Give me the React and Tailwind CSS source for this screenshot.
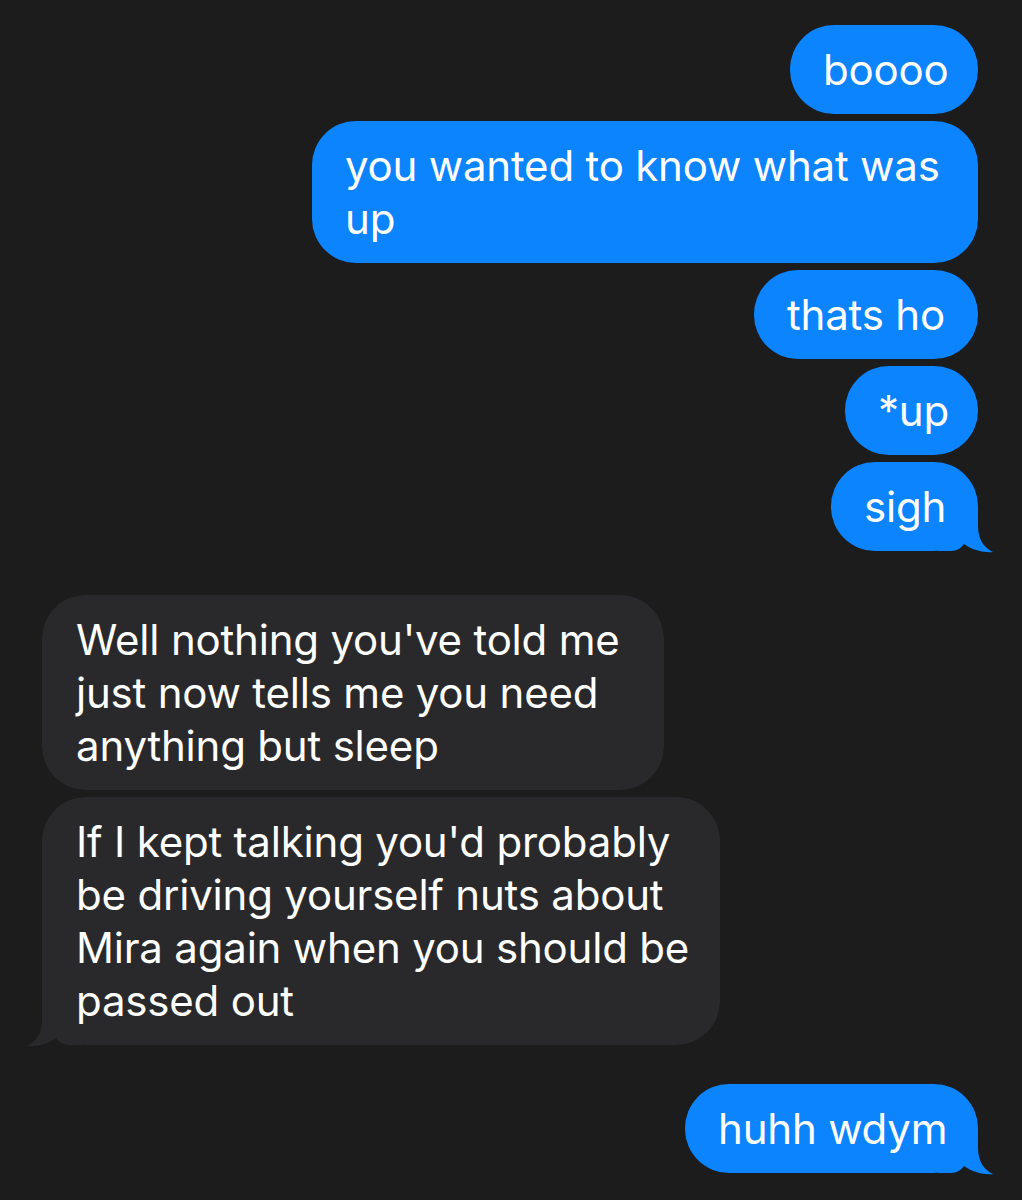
import React from "react";

function Tail({ side, color }) {
  const cls =
    side === "right"
      ? "absolute right-[-20px] bottom-[-2px] w-[60px] h-[46px]"
      : "absolute left-[-20px] bottom-[-2px] w-[60px] h-[46px] -scale-x-100";
  return (
    <svg className={cls} viewBox="0 0 60 46" aria-hidden="true">
      <path
        d="M0 0 L40 0 L40 19 C40 32 46 41 55 45 C46 46 34 43 26 37 C23 41 19 44 13 44 L0 44 Z"
        fill={color}
      />
    </svg>
  );
}

function Sent({ w, children, tail, className = "" }) {
  return (
    <div className={"self-end relative " + className} style={{ width: w }}>
      <div className="relative z-10 bg-[#0b84fe] rounded-[44px] pl-[33px] pr-[10px] pt-[18px] pb-[18px] text-white whitespace-nowrap">
        {children}
      </div>
      {tail && <Tail side="right" color="#0b84fe" />}
    </div>
  );
}

function Recv({ w, children, tail, className = "" }) {
  return (
    <div className={"self-start relative " + className} style={{ width: w }}>
      <div className="relative z-10 bg-[#29292b] rounded-[44px] pl-[34px] pr-[10px] pt-[18px] pb-[18px] text-white whitespace-nowrap">
        {children}
      </div>
      {tail && <Tail side="left" color="#29292b" />}
    </div>
  );
}

export default function App() {
  return (
    <div
      className="w-[1022px] h-[1200px] bg-[#1c1c1d] overflow-hidden"
      style={{ fontFamily: "Inter, 'Noto Sans', sans-serif" }}
    >
      <div className="flex flex-col gap-[7px] pt-[25px] pl-[42px] pr-[44px] text-[42px] leading-[53px] tracking-[-0.2px]">
        <Sent w="188px">boooo</Sent>
        <Sent w="666px">
          you wanted to know what was
          <br />
          up
        </Sent>
        <Sent w="224px">thats ho</Sent>
        <Sent w="133px">*up</Sent>
        <Sent w="147px" tail>
          sigh
        </Sent>
        <Recv w="622px" className="mt-[37px]">
          Well nothing you've told me
          <br />
          just now tells me you need
          <br />
          anything but sleep
        </Recv>
        <Recv w="678px" tail>
          If I kept talking you'd probably
          <br />
          be driving yourself nuts about
          <br />
          Mira again when you should be
          <br />
          passed out
        </Recv>
        <Sent w="293px" tail className="mt-[32px]">
          huhh wdym
        </Sent>
      </div>
    </div>
  );
}
